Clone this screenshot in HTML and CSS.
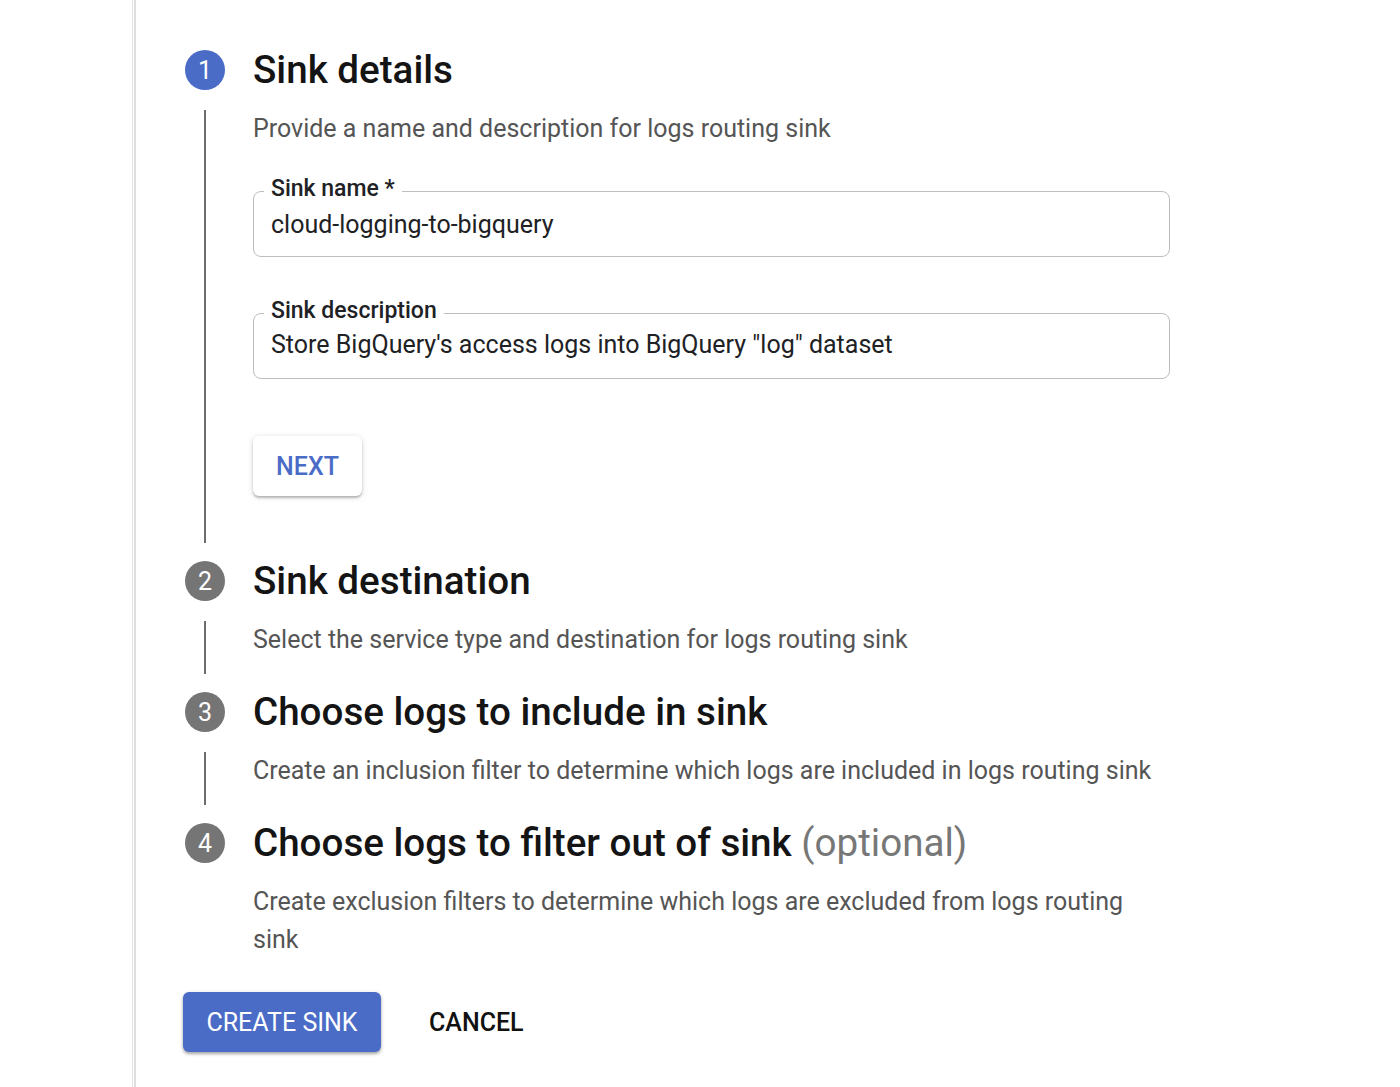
FILE: index.html
```html
<!DOCTYPE html>
<html lang="en">
<head>
<meta charset="utf-8">
<title>Create logs routing sink</title>
<link rel="stylesheet" href="styles.css">
</head>
<body>
<div class="page">
  <div class="edge"></div>
  <main class="content">
    <section class="step">
      <div class="step-head">
        <span class="badge badge-active">1</span>
        <h2 class="step-title">Sink details</h2>
      </div>
      <div class="step-body">
        <div class="rail"><span class="rail-line"></span></div>
        <div class="step-content step-content-open">
          <p class="step-desc">Provide a name and description for logs routing sink</p>
          <fieldset class="field">
            <legend class="field-label">Sink name *</legend>
            <div class="field-value">cloud-logging-to-bigquery</div>
          </fieldset>
          <fieldset class="field field-second">
            <legend class="field-label">Sink description</legend>
            <div class="field-value">Store BigQuery's access logs into BigQuery "log" dataset</div>
          </fieldset>
          <button class="btn btn-raised">NEXT</button>
        </div>
      </div>
    </section>

    <section class="step">
      <div class="step-head">
        <span class="badge">2</span>
        <h2 class="step-title">Sink destination</h2>
      </div>
      <div class="step-body">
        <div class="rail"><span class="rail-line"></span></div>
        <div class="step-content">
          <p class="step-desc">Select the service type and destination for logs routing sink</p>
        </div>
      </div>
    </section>

    <section class="step">
      <div class="step-head">
        <span class="badge">3</span>
        <h2 class="step-title">Choose logs to include in sink</h2>
      </div>
      <div class="step-body">
        <div class="rail"><span class="rail-line"></span></div>
        <div class="step-content">
          <p class="step-desc">Create an inclusion filter to determine which logs are included in logs routing sink</p>
        </div>
      </div>
    </section>

    <section class="step">
      <div class="step-head">
        <span class="badge">4</span>
        <h2 class="step-title">Choose logs to filter out of sink <span class="optional">(optional)</span></h2>
      </div>
      <div class="step-body">
        <div class="rail"></div>
        <div class="step-content step-content-last">
          <p class="step-desc">Create exclusion filters to determine which logs are excluded from logs routing sink</p>
        </div>
      </div>
    </section>

    <div class="actions">
      <button class="btn btn-primary">CREATE SINK</button>
      <button class="btn btn-text">CANCEL</button>
    </div>
  </main>
</div>
</body>
</html>
```

FILE: styles.css
```css
* {
  box-sizing: border-box;
}

html, body {
  margin: 0;
  padding: 0;
  background: #ffffff;
}

body {
  font-family: Roboto, "Liberation Sans", Arial, sans-serif;
  color: #202124;
  -webkit-font-smoothing: antialiased;
}

.page {
  display: flex;
  min-height: 1087px;
}

.edge {
  width: 133px;
  flex: none;
  border-right: 1px solid #e6e6e6;
}

.content {
  margin-left: 1px;
  border-left: 2px solid #dedede;
  padding: 50px 0 40px 49px;
  flex: 1;
}

.step {
  width: 985px;
}

.step-head {
  display: flex;
  align-items: center;
  gap: 28px;
  height: 40px;
}

.badge {
  width: 40px;
  height: 40px;
  flex: none;
  border-radius: 50%;
  background: #757575;
  color: #ffffff;
  font-size: 25px;
  font-weight: 400;
  display: flex;
  align-items: center;
  justify-content: center;
  line-height: 1;
}

.badge-active {
  background: #4a6cc7;
}

.step-title {
  margin: 0;
  font-size: 38.6px;
  font-weight: 500;
  line-height: 40px;
  color: #141414;
  white-space: nowrap;
}

.optional {
  font-weight: 400;
  color: #777777;
}

.step-body {
  display: flex;
  gap: 28px;
}

.rail {
  width: 40px;
  flex: none;
  display: flex;
  justify-content: center;
  padding: 20px 0 18px;
}

.rail-line {
  width: 2px;
  background: #6d6d6d;
  display: block;
}

.step-content {
  width: 917px;
  padding: 20px 0 33px;
}

.step-content-open {
  padding-bottom: 65px;
}

.step-content-last {
  padding-bottom: 0;
}

.step-desc {
  margin: 0;
  font-size: 25px;
  line-height: 38px;
  color: #555555;
}

.field {
  margin: 28px 0 0;
  padding: 4px 17px 16px;
  border: 1px solid #bdbdbd;
  border-radius: 8px;
  min-width: 0;
}

.field-second {
  margin-top: 41px;
  padding-top: 2px;
  padding-bottom: 18px;
}

.field-label {
  padding: 0 7px 4px;
  margin-left: -7px;
  font-size: 23px;
  font-weight: 500;
  line-height: 26px;
  color: #202124;
}

.field-value {
  font-size: 25px;
  line-height: 30px;
  color: #202124;
}

.btn {
  font-family: Roboto, "Liberation Sans", Arial, sans-serif;
  font-size: 25px;
  font-weight: 500;
  height: 60px;
  padding: 0;
  border: none;
  border-radius: 6px;
  cursor: pointer;
  letter-spacing: 0;
}

.btn-raised {
  margin-top: 57px;
  width: 109px;
  background: #ffffff;
  color: #4a6cc7;
  box-shadow: 0 2px 2px rgba(0, 0, 0, 0.22), 0 1px 6px rgba(0, 0, 0, 0.14);
}

.actions {
  display: flex;
  align-items: center;
  gap: 24px;
  margin: 33px 0 0 -2px;
}

.btn-primary {
  width: 198px;
  background: #4a6cc7;
  color: #ffffff;
  font-weight: 400;
  box-shadow: 0 2px 3px rgba(0, 0, 0, 0.28), 0 1px 5px rgba(0, 0, 0, 0.12);
}

.btn-text {
  background: transparent;
  color: #111111;
  font-weight: 500;
  padding: 0 24px;
}
```
